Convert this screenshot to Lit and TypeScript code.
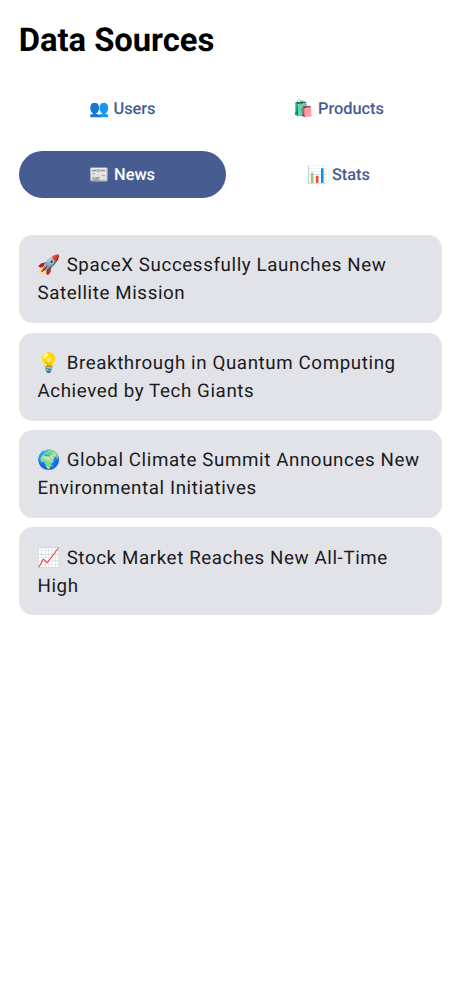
import { LitElement, html, css } from "lit";
import { customElement, state } from "lit/decorators.js";

const TABS = [
  ["👥", "Users"],
  ["🛍️", "Products"],
  ["📰", "News"],
  ["📊", "Stats"],
];
const NEWS = [
  ["🚀", "SpaceX Successfully Launches New Satellite Mission"],
  ["💡", "Breakthrough in Quantum Computing Achieved by Tech Giants"],
  ["🌍", "Global Climate Summit Announces New Environmental Initiatives"],
  ["📈", "Stock Market Reaches New All-Time High"],
];

@customElement("app-root")
export class AppRoot extends LitElement {
  @state() active = "News";

  static styles = css`
    :host {
      display: block;
      box-sizing: border-box;
      min-height: 1000px;
      padding: 20px 18.75px;
      background: #fff;
      color: #1a1b20;
      font-family: Roboto, "Noto Color Emoji", sans-serif;
      text-rendering: geometricPrecision;
    }
    h1 {
      margin: 0;
      font-size: 32.8px;
      line-height: 42px;
      font-weight: 700;
      letter-spacing: -0.05px;
      color: #000;
    }
    .tabs {
      display: grid;
      grid-template-columns: 1fr 1fr;
      gap: 19px 9.4px;
      margin-top: 23px;
    }
    .tab {
      height: 46.8px;
      border: 0;
      padding: 2px 0 0;
      border-radius: 24px;
      background: transparent;
      color: #475d92;
      font: 500 16.4px/23px Roboto, "Noto Color Emoji", sans-serif;
      letter-spacing: -0.02px;
      text-rendering: geometricPrecision;
    }
    .tab.active {
      background: #475d92;
      color: #fff;
    }
    .list {
      display: grid;
      gap: 9.4px;
      margin-top: 37.5px;
    }
    .card {
      height: 88.05px;
      box-sizing: border-box;
      padding: 16.3px 18.7px 14px;
      border-radius: 14px;
      background: #e2e2e9;
      font-size: 18.74px;
      line-height: 28px;
      letter-spacing: 0.605px;
    }
  `;

  render() {
    return html`
      <h1>Data Sources</h1>
      <div class="tabs">
        ${TABS.map(
          ([icon, name]) => html`<button
            class="tab ${name === this.active ? "active" : ""}"
            @click=${() => (this.active = name)}
          >${icon} ${name}</button>`
        )}
      </div>
      <div class="list">
        ${NEWS.map(([icon, title]) => html`<div class="card">${icon} ${title}</div>`)}
      </div>
    `;
  }
}
